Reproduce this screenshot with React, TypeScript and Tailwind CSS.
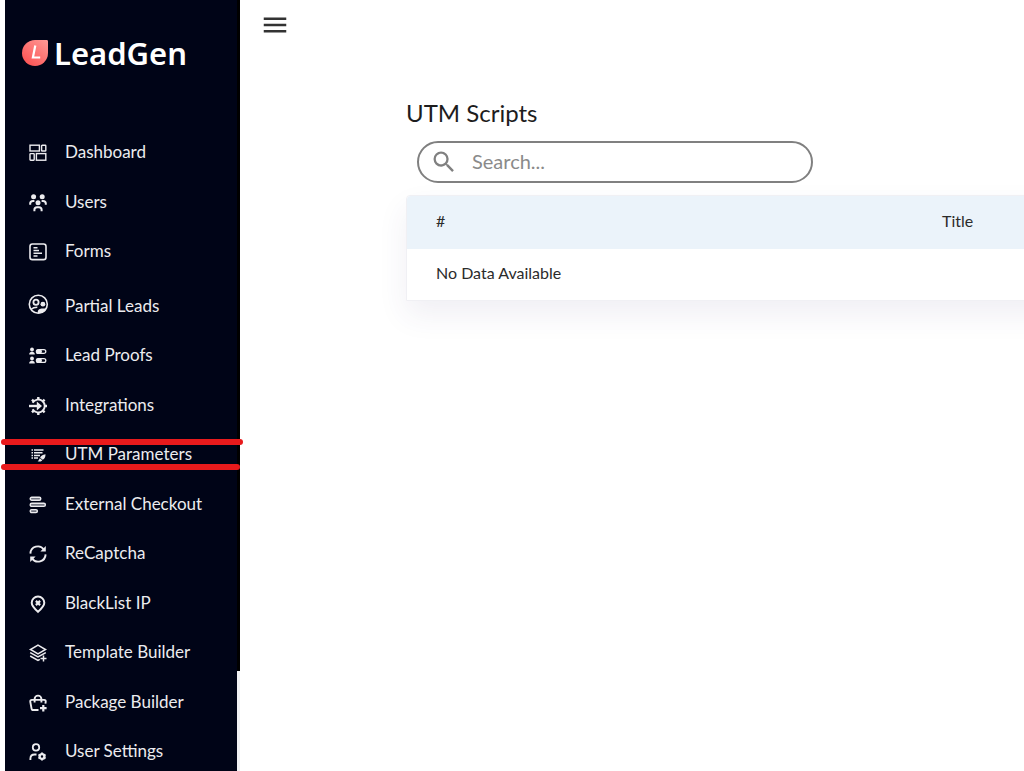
import type { ReactNode } from "react";
import { MdMenu, MdSearch } from "react-icons/md";

type NavItem = {
  label: string;
  icon: ReactNode;
  marked?: boolean;
};

const navItems: NavItem[] = [
  {
    label: "Dashboard",
    icon: (
      <g strokeWidth="1.4">
        <rect x="1" y="1.2" width="9.4" height="5.8" />
        <rect x="12.6" y="1.2" width="4.2" height="5.8" rx="0.6" />
        <rect x="1" y="9.6" width="4.2" height="6.6" rx="0.6" />
        <rect x="7.4" y="9.6" width="9.4" height="6.6" />
      </g>
    ),
  },
  {
    label: "Users",
    icon: (
      <>
        <g fill="currentColor" stroke="none">
          <circle cx="4.6" cy="2.8" r="2.5" />
          <circle cx="13.2" cy="2.8" r="2.5" />
          <circle cx="9" cy="8.8" r="2.5" />
        </g>
        <path
          strokeWidth="2"
          d="M1.2 10.8V9.6c0-1.8 1-2.6 2.8-2.6h1.4M16.8 10.8V9.6c0-1.8-1-2.6-2.8-2.6h-1.4M5.4 17.2v-1.4c0-1.7 1-2.5 2.6-2.5h2c1.6 0 2.6.8 2.6 2.5v1.4"
        />
      </>
    ),
  },
  {
    label: "Forms",
    icon: (
      <>
        <rect x="1" y="1" width="16" height="15.6" rx="2.4" strokeWidth="1.6" />
        <path strokeWidth="1.5" d="M4.5 4.8h4M4.5 7.5h5.5M4.5 10.2h8.5M4.5 12.9h4" />
      </>
    ),
  },
  {
    label: "Partial Leads",
    icon: (
      <g transform="translate(0.3 -2.8)">
        <circle cx="9" cy="9" r="9" strokeWidth="1.6" />
        <circle cx="6.7" cy="7" r="2.6" strokeWidth="1.8" />
        <g fill="currentColor" stroke="none">
          <circle cx="13.6" cy="9" r="2.4" />
          <path d="M8.5 17.8c-.4-3.4 1.8-4.4 5-4.4 1.5 0 2.7.1 3.500.6-1.5 2.8-4.8 4.500-8.500 3.800z" />
        </g>
        <path strokeWidth="1.4" d="M2 14c1.4-1.5 3-2 6-2" />
      </g>
    ),
  },
  {
    label: "Lead Proofs",
    icon: (
      <>
        <g fill="currentColor" stroke="none">
          <circle cx="3" cy="2.5" r="1.9" />
          <path d="M.2 7.6c0-2 1-2.9 2.8-2.9s2.8.9 2.8 2.9z" />
          <circle cx="3" cy="11.5" r="1.9" />
          <path d="M.2 16.6c0-2 1-2.9 2.8-2.9s2.8.9 2.8 2.9z" />
          <rect x="7" y="2.2" width="6" height="4.6" rx="2.3" />
          <rect x="7" y="11.2" width="6" height="4.6" rx="2.3" />
        </g>
        <rect x="7.4" y="2.6" width="9.4" height="3.8" rx="1.9" strokeWidth="1.3" />
        <rect x="7.4" y="11.6" width="9.4" height="3.8" rx="1.9" strokeWidth="1.3" />
      </>
    ),
  },
  {
    label: "Integrations",
    icon: (
      <>
        <path strokeWidth="1.9" d="M3.6 5.8a6.5 6.5 0 1 1 0 6.4" />
        <path
          strokeWidth="2.4"
          d="M9.3 0v2.5M9.3 15.5V18M15.6 9H18M13.9 4.4l1.7-1.7M13.9 13.6l1.7 1.7M4.7 4.4L3 2.7M4.7 13.6L3 15.3"
        />
        <path strokeWidth="2.4" d="M0 9h9.5" />
        <path fill="currentColor" stroke="none" d="M7.8 4.6L13 9l-5.2 4.4z" />
      </>
    ),
  },
  {
    label: "UTM Parameters",
    marked: true,
    icon: (
      <>
        <path
          strokeWidth="1.5"
          d="M2.5 4H4M5 4h9.5M2.5 6.7H4M5 6.7h8.5M2.5 9.4H4M5 9.4h6M2.5 12.1H4M5 12.1h4"
        />
        <path
          fill="currentColor"
          stroke="none"
          d="M16.5 8.3c-3 .4-4.8 1.6-5.4 3.5l2.6 2c1.9-.8 2.8-2.6 2.8-5.5zM10.7 12.3l2.6 2c-.9 1.4-2.7 1.6-4.7.9 1.1-.6 1.5-1.5 2.1-2.9z"
        />
      </>
    ),
  },
  {
    label: "External Checkout",
    icon: (
      <g strokeWidth="1.4" fill="#737682">
        <rect x="1.2" y="1.2" width="10.6" height="3" rx="1.5" />
        <rect x="1.2" y="7.2" width="15.2" height="3.2" rx="1.6" />
        <rect x="1.2" y="13.6" width="7.2" height="3" rx="1.5" />
      </g>
    ),
  },
  {
    label: "ReCaptcha",
    icon: (
      <>
        <path strokeWidth="1.9" d="M1.4 8.6A7.4 7.4 0 0 1 15 4.8M16.6 9.4A7.4 7.4 0 0 1 3 13.2" />
        <path fill="currentColor" stroke="none" d="M16.8 1v5.4h-5.4zM1.2 17v-5.4h5.4z" />
      </>
    ),
  },
  {
    label: "BlackList IP",
    icon: (
      <>
        <path
          strokeWidth="2"
          d="M9 16.8C5 13.3 2.7 10.6 2.7 7.8a6.3 6.3 0 0 1 12.6 0c0 2.8-2.3 5.5-6.3 9z"
        />
        <path strokeWidth="2.2" d="M6.9 5.9l4.2 4.2M11.1 5.9L6.9 10.1" />
      </>
    ),
  },
  {
    label: "Template Builder",
    icon: (
      <path
        strokeWidth="1.5"
        d="M9 1.2L16.5 5.5 9 9.8 1.5 5.5zM1.2 8.6L9 13l7.8-4.4M1.2 12L9 16.4l1.8-1M14.5 11.5v6M11.5 14.5h6"
      />
    ),
  },
  {
    label: "Package Builder",
    icon: (
      <>
        <path
          strokeWidth="1.9"
          d="M9.5 16H4.4c-1.2 0-1.8-.6-1.9-1.7L1.3 7.9c-.2-1.2.4-2 1.6-2h12.2c1.2 0 1.8.8 1.6 2l-.3 1.7M5.6 8.5V5a3.4 3.4 0 0 1 6.8 0v3.5"
        />
        <path strokeWidth="2.2" d="M14.3 11v6.5M11 14.2h6.6" />
      </>
    ),
  },
  {
    label: "User Settings",
    icon: (
      <>
        <circle cx="7" cy="4.4" r="3.2" strokeWidth="1.8" />
        <path strokeWidth="1.9" d="M1.4 17v-1.3c0-2.7 1.4-4.2 4.2-4.2h1.9" />
        <circle cx="13" cy="13.5" r="2.4" strokeWidth="2.4" />
        <path
          strokeWidth="1.9"
          d="M13 9.6v1.5M13 15.9v1.5M9.5 11.5l1.5.9M15 14.6l1.5.9M9.5 15.5l1.5-.9M15 12.4l1.5-.9"
        />
      </>
    ),
  },
];

function Logo() {
  return (
    <a href="#" className="flex items-center gap-[6px] pt-[35px] pl-[17px] text-white">
      <svg viewBox="0 0 26 26" className="size-[26px]" aria-hidden="true">
        <defs>
          <linearGradient id="drop" x1="1" y1="0" x2="0.2" y2="1">
            <stop offset="0" stopColor="#ff9a96" />
            <stop offset="1" stopColor="#fb5253" />
          </linearGradient>
        </defs>
        <path d="M13 0h11.5c1 0 1.5.5 1.5 1.5V13A13 13 0 1 1 13 0z" fill="url(#drop)" />
        <path d="M13.3 5.5l-2.4 12h7.3" fill="none" stroke="#fff" strokeWidth="2.2" />
      </svg>
      <span className="font-['Noto_Sans'] text-[31px] leading-9 font-semibold">LeadGen</span>
    </a>
  );
}

function NavLink({ label, icon, marked }: NavItem) {
  return (
    <li className="relative odd:h-[50px] even:h-[49px] nth-4:mt-[5px]">
      <a href="#" className="flex h-12 items-center gap-[18px] pl-6 text-[17px] text-[#ececef]">
        <svg
          viewBox="0 0 18 18"
          className="mt-px size-[18px] shrink-0 overflow-visible"
          fill="none"
          stroke="currentColor"
          aria-hidden="true"
        >
          {icon}
        </svg>
        {label}
      </a>
      {marked && (
        <>
          <span className="absolute top-[9px] -right-[6px] -left-1 h-[6px] rounded-full bg-[#e81a1c]" />
          <span className="absolute top-[34px] -right-[3px] -left-1 h-[6px] rounded-full bg-[#e81a1c]" />
        </>
      )}
    </li>
  );
}

function Sidebar() {
  return (
    <aside className="relative ml-[5px] flex w-[235px] shrink-0 bg-[#000417]">
      <div className="z-10 flex-1">
        <Logo />
        <nav className="pt-[57px]">
          <ul>
            {navItems.map((item) => (
              <NavLink key={item.label} {...item} />
            ))}
          </ul>
        </nav>
      </div>
      <div className="w-[3px] bg-[#f1f1f3]">
        <div className="h-[87%] bg-black" />
      </div>
    </aside>
  );
}

function SearchBox() {
  return (
    <label className="ml-[11px] flex h-[42px] w-[396px] items-center gap-[14px] rounded-full border-2 border-[#808080] pl-[11px] text-[#808080]">
      <MdSearch className="size-7 shrink-0" aria-hidden="true" />
      <input
        type="text"
        aria-label="Search"
        placeholder="Search..."
        className="min-w-0 flex-1 bg-transparent pb-[2px] text-xl outline-none placeholder:text-[#8a8a8a]"
      />
    </label>
  );
}

function ScriptsTable() {
  return (
    <div className="mt-3 -mr-10 rounded-t-sm border border-[#f0f0f4] bg-white shadow-[0_14px_30px_rgba(60,50,110,0.08)]">
      <table className="w-full table-fixed text-left text-base text-[#2b2b2b]">
        <thead>
          <tr className="h-[53px] bg-[#ebf3fa]">
            <th className="w-[523px] rounded-tl-sm pb-1 pl-[29px] font-normal">#</th>
            <th className="pb-1 pl-3 font-normal">Title</th>
          </tr>
        </thead>
        <tbody>
          <tr className="h-[51px]">
            <td colSpan={2} className="pb-1 pl-[29px]">
              No Data Available
            </td>
          </tr>
        </tbody>
      </table>
    </div>
  );
}

function App() {
  return (
    <div className="flex h-screen overflow-hidden bg-white font-[Lato,sans-serif]">
      <Sidebar />
      <main className="min-w-0 flex-1 overflow-hidden">
        <header className="flex h-[50px] items-center pl-5">
          <button type="button" aria-label="Toggle menu" className="text-[#333333]">
            <MdMenu className="size-[30px]" />
          </button>
        </header>
        <section className="pt-[47px] pl-[166px]">
          <h1 className="mb-3 text-2xl leading-8 text-[#1d1d1d]">UTM Scripts</h1>
          <SearchBox />
          <ScriptsTable />
        </section>
      </main>
    </div>
  );
}

export default App;
